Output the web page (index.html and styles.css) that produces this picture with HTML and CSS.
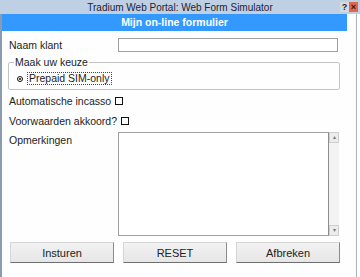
FILE: index.html
```html
<!DOCTYPE html>
<html lang="nl">
<head>
    <meta charset="UTF-8">
    <title>Web Form Simulator</title>
    <link rel="stylesheet" href="styles.css">
</head>
<body>
    <div class="titlebar">
        <span class="title">Tradium Web Portal: Web Form Simulator</span>
        <span class="tb-btn help">?</span>
        <span class="tb-btn close">&#215;</span>
    </div>
    <div class="window">
        <div class="header">Mijn on-line formulier</div>
        <form class="form">
            <div class="row name-row">
                <label class="label">Naam klant</label>
                <span class="input"></span>
            </div>
            <fieldset class="choice">
                <legend>Maak uw keuze</legend>
                <div class="choice-row">
                    <span class="radio"></span>
                    <span class="radio-label">Prepaid SIM-only</span>
                </div>
            </fieldset>
            <div class="row check-row">
                <span>Automatische incasso</span>
                <span class="checkbox"></span>
            </div>
            <div class="row check-row">
                <span>Voorwaarden akkoord?</span>
                <span class="checkbox"></span>
            </div>
            <div class="row notes-row">
                <label class="label">Opmerkingen</label>
                <div class="textarea">
                    <div class="text-box"></div>
                    <div class="scrollbar">
                        <span class="sb-btn">&#9652;</span>
                        <span class="sb-btn">&#9662;</span>
                    </div>
                </div>
            </div>
            <div class="buttons">
                <button type="button">Insturen</button>
                <button type="button">RESET</button>
                <button type="button">Afbreken</button>
            </div>
        </form>
    </div>
</body>
</html>
```

FILE: styles.css
```css
body {
    margin: 0;
    background-color: #ffffff;
    font-family: "Liberation Sans", Arial, sans-serif;
    color: #222;
}

.titlebar {
    height: 14px;
    background-color: #bfcfe4;
    display: flex;
    align-items: center;
    justify-content: center;
    position: relative;
    font-size: 10px;
    color: #1e2530;
}

.tb-btn {
    position: absolute;
    top: 2px;
    width: 9px;
    height: 10px;
    font-size: 9px;
    line-height: 10px;
    text-align: center;
    font-weight: bold;
}

.help {
    right: 11px;
    background-color: #d3dae4;
    color: #222;
}

.close {
    right: 2px;
    background-color: #e2664f;
    color: #3a1510;
}

.window {
    width: 354px;
    height: 263px;
    border-left: 2px solid #8b9ab0;
    border-right: 1px solid #a8b3c4;
    background-color: #fefefe;
}

.header {
    width: 345px;
    height: 17px;
    background-color: #3399ff;
    color: #ffffff;
    font-weight: bold;
    font-size: 10.5px;
    line-height: 17px;
    text-align: center;
}

.form {
    padding: 0 0 0 7px;
    width: 331px;
    font-size: 10.5px;
}

.row {
    display: flex;
    align-items: center;
}

.label {
    width: 109px;
}

.name-row {
    margin-top: 7px;
    height: 14px;
}

.input {
    width: 218px;
    height: 12px;
    border: 1px solid #a0a0a0;
    background-color: #fff;
}

.choice {
    margin: 4px 0 0 -1px;
    padding: 0 0 4px 8px;
    width: 322px;
    border: 1px solid #c4c4c4;
    border-radius: 2px;
    font-size: 10.5px;
}

.choice legend {
    padding: 0 1px;
    margin-left: -3px;
    font-size: 10.5px;
    line-height: 12px;
}

.choice-row {
    display: flex;
    align-items: center;
    height: 13px;
    margin-top: 4px;
}

.radio {
    width: 4px;
    height: 4px;
    border: 1px solid #111;
    border-radius: 50%;
    position: relative;
    margin-right: 4px;
}

.radio::after {
    content: "";
    position: absolute;
    left: 1px;
    top: 1px;
    width: 2px;
    height: 2px;
    background-color: #111;
    border-radius: 50%;
}

.radio-label {
    border: 1px dotted #444;
    padding: 0 1px;
    line-height: 11px;
}

.check-row {
    height: 19px;
    margin-top: 1px;
}

.checkbox {
    width: 6px;
    height: 6px;
    border: 1px solid #111;
    margin-left: 4px;
    margin-top: 1px;
}

.notes-row {
    margin-top: 2px;
    align-items: flex-start;
}

.notes-row .label {
    margin-top: 2px;
}

.textarea {
    display: flex;
    height: 104px;
}

.text-box {
    width: 209px;
    border: 1px solid #a0a0a0;
    border-right: 1px solid #8c8c8c;
    background-color: #fff;
}

.scrollbar {
    width: 10px;
    background-color: #f3f3f3;
    display: flex;
    flex-direction: column;
    justify-content: space-between;
}

.sb-btn {
    height: 9px;
    border: 1px solid #cfcfcf;
    background-color: #ececec;
    font-size: 6px;
    line-height: 9px;
    text-align: center;
    color: #777;
}

.buttons {
    display: flex;
    gap: 9px;
    margin-top: 6px;
    margin-left: 1px;
}

.buttons button {
    width: 104px;
    height: 21px;
    padding: 0;
    font-family: "Liberation Sans", Arial, sans-serif;
    font-size: 11px;
    color: #222;
    background: linear-gradient(#f2f2f2, #e6e6e6);
    border: 1px solid #d6d6d6;
    border-right-color: #8a8a8a;
    border-bottom-color: #6e6e6e;
}
```
